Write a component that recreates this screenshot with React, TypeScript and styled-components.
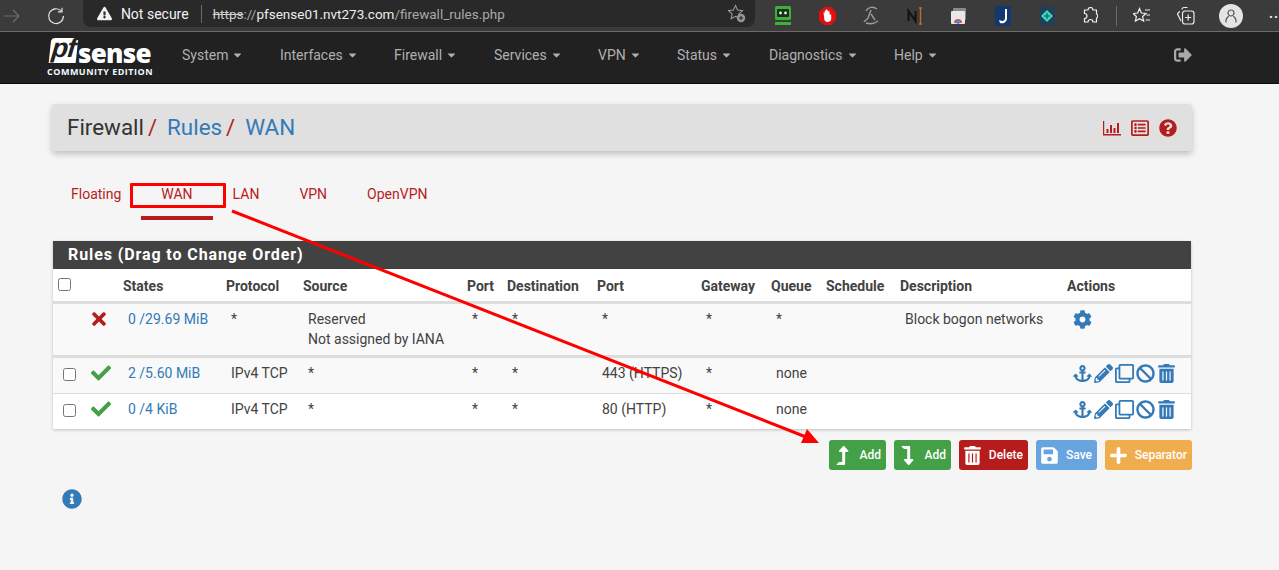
import React from "react";
import styled, { createGlobalStyle } from "styled-components";
import {
  FaAnchor,
  FaBan,
  FaCheck,
  FaCog,
  FaInfoCircle,
  FaLevelDownAlt,
  FaLevelUpAlt,
  FaPencilAlt,
  FaPlus,
  FaQuestionCircle,
  FaRegClone,
  FaRegListAlt,
  FaSave,
  FaSignOutAlt,
  FaTimes,
  FaTrashAlt,
  FaExclamationTriangle,
  FaCaretDown,
} from "react-icons/fa";

const GlobalStyle = createGlobalStyle`
  html, body {
    margin: 0;
    height: 570px;
    overflow: hidden;
    background: #f5f5f5;
    font-family: Roboto, "Liberation Sans", sans-serif;
    font-size: 14px;
    color: #424242;
  }
`;

const BrowserBar = styled.div`
  height: 31px;
  background: #3b3b3b;
  border-bottom: 1px solid #6a6a6a;
  display: flex;
  align-items: flex-start;
`;

const NavButtons = styled.div`
  width: 83px;
  height: 31px;
  display: flex;
  align-items: center;
  padding-left: 4px;
  box-sizing: border-box;
  gap: 27px;
`;

const AddressBar = styled.div`
  width: 673px;
  height: 27px;
  background: #292929;
  border-radius: 0 0 8px 8px;
  display: flex;
  align-items: center;
  padding-left: 14px;
  box-sizing: border-box;
  font-size: 14px;
  color: #f2f2f2;
`;

const NotSecure = styled.span`
  margin-left: 9px;
  padding-right: 12px;
  border-right: 1px solid #6b6b6b;
  line-height: 18px;
`;

const Url = styled.span`
  margin-left: 11px;
  color: #a8a8a8;
  font-size: 13.5px;
`;

const UrlHost = styled.span`
  color: #ededed;
`;

const UrlStrike = styled.span`
  color: #d0d0d0;
  text-decoration: line-through;
`;

const StarSlot = styled.div`
  margin-left: auto;
  margin-right: 9px;
  display: flex;
`;

const Extensions = styled.div`
  flex: 1;
  height: 31px;
  display: flex;
  align-items: center;
  padding-left: 20px;
`;

const ExtSlot = styled.div<{ $w?: number }>`
  width: ${(p) => p.$w ?? 44}px;
  height: 31px;
  flex: none;
  display: flex;
  align-items: center;
`;

const ExtDivider = styled.div`
  width: 1px;
  height: 20px;
  background: #6b6b6b;
  margin-right: 16px;
  flex: none;
`;

const Avatar = styled.div`
  width: 24px;
  height: 24px;
  border-radius: 50%;
  background: #e4e4e4;
  display: flex;
  align-items: center;
  justify-content: center;
`;

const Dots = styled.span`
  color: #eee;
  font-size: 14px;
  letter-spacing: 1px;
  font-weight: 700;
  margin-top: -6px;
`;

const NavBar = styled.nav`
  height: 52px;
  background: #212121;
  border-bottom: 1px solid #0c0c0c;
  box-sizing: border-box;
  display: flex;
  align-items: center;
  padding: 0 0 6px 47px;
`;

const Logo = styled.div`
  width: 116px;
  flex: none;
  display: flex;
  flex-direction: column;
  margin: 0 0 -6px;
`;

const LogoTop = styled.div`
  display: flex;
  align-items: flex-end;
  height: 25px;
  padding-left: 3px;
`;

const LogoPf = styled.span`
  background: #fff;
  color: #212121;
  width: 27px;
  height: 25px;
  border-radius: 4px 0 0 0;
  font: italic 900 27px/21px "Liberation Sans", sans-serif;
  letter-spacing: -1px;
  text-align: center;
  transform: skewX(-6deg);
`;

const LogoSense = styled.span`
  color: #fff;
  font: 800 26px/20px "Open Sans", "Liberation Sans", sans-serif;
  letter-spacing: -0.7px;
  margin-left: 1px;
`;

const LogoEdition = styled.span`
  color: #f2fbff;
  font: 700 9px/10px "Open Sans", "Liberation Sans", sans-serif;
  letter-spacing: 0.5px;
  white-space: nowrap;
  margin-top: 4px;
`;

const NavMenu = styled.div`
  display: flex;
  flex: 1;
`;

const NavItem = styled.a<{ $w: number }>`
  width: ${(p) => p.$w}px;
  flex: none;
  padding-left: 19px;
  box-sizing: border-box;
  color: #b0b0b0;
  font-size: 14px;
  display: flex;
  align-items: center;
  gap: 5px;
  svg {
    width: 9px;
    height: 12px;
  }
`;

const Logout = styled.div`
  color: #a9a9a9;
  font-size: 18px;
  display: flex;
  margin-right: 87px;
`;

const Page = styled.main`
  padding: 20px 87px 0 52px;
  position: relative;
`;

const TitleBar = styled.header`
  height: 47px;
  background: #e0e0e0;
  border-radius: 3px;
  box-shadow: 0 3px 6px rgba(0, 0, 0, 0.22);
  display: flex;
  align-items: center;
  padding: 0 15px;
`;

const Crumb = styled.h1<{ $link?: boolean }>`
  margin: 0 10px 0 0;
  font-size: 22.4px;
  font-weight: 400;
  line-height: 47px;
  color: ${(p) => (p.$link ? "#337ab7" : "#333")};
`;

const CrumbSlash = styled.span`
  color: #b71c1c;
  margin-left: 4px;
  font-size: 22px;
`;

const TitleIcons = styled.div`
  margin-left: auto;
  display: flex;
  align-items: center;
  gap: 10px;
  color: #b71c1c;
  font-size: 18px;
  svg {
    display: block;
  }
`;

const Tabs = styled.div`
  display: flex;
  margin: 27px 0 0 -1px;
  height: 42px;
`;

const Tab = styled.a<{ $active?: boolean }>`
  padding: 7px 20px 0;
  height: 42px;
  box-sizing: border-box;
  color: #b71c1c;
  font-size: 14px;
  line-height: 18px;
  border-bottom: 4px solid ${(p) => (p.$active ? "#b71c1c" : "transparent")};
`;

const RulesPanel = styled.section`
  margin: 21px 1px 0;
  background: #fff;
  box-shadow: 0 1px 3px rgba(0, 0, 0, 0.22);
`;

const RulesHeading = styled.h2`
  margin: 0;
  height: 28px;
  background: #424242;
  color: #fff;
  font-size: 16px;
  font-weight: 700;
  line-height: 28px;
  padding-left: 15px;
  letter-spacing: 0.9px;
`;

const RulesTable = styled.table`
  width: 100%;
  table-layout: fixed;
  border-collapse: separate;
  border-spacing: 0;
`;

const HeadCell = styled.th`
  height: 35px;
  padding: 2px 0 0 5px;
  box-sizing: border-box;
  text-align: left;
  font-size: 14px;
  font-weight: 700;
  color: #424242;
  border-bottom: 3px solid #ddd;
  white-space: nowrap;
`;

const Row = styled.tr<{ $h: number; $shade?: boolean; $thick?: boolean; $last?: boolean }>`
  background: ${(p) => (p.$shade ? "#f9f9f9" : "#fff")};
  td {
    height: ${(p) => p.$h}px;
    border-bottom: ${(p) => (p.$last ? "0" : p.$thick ? "3px" : "1px")} solid #ddd;
  }
`;

const Cell = styled.td<{ $blue?: boolean }>`
  padding: 5px 0 0 10px;
  box-sizing: border-box;
  vertical-align: top;
  line-height: 20px;
  color: ${(p) => (p.$blue ? "#337ab7" : "#424242")};
  white-space: nowrap;
`;

const CheckCell = styled.td`
  padding: 10px 0 0 10px;
  box-sizing: border-box;
  vertical-align: top;
`;

const HeadCheck = styled.input`
  margin: 0 0 4px 0;
  width: 13px;
  height: 13px;
  display: block;
`;

const RowCheck = styled.input`
  margin: 0;
  width: 13px;
  height: 13px;
  display: block;
`;

const StatusCell = styled.td<{ $ok?: boolean }>`
  padding: 4px 0 0 ${(p) => (p.$ok ? 3 : 1)}px;
  box-sizing: border-box;
  vertical-align: top;
  color: ${(p) => (p.$ok ? "#43a047" : "#b71c1c")};
  font-size: 20px;
  line-height: 20px;
  svg {
    display: block;
    margin-top: 1px;
  }
`;

const ActionIcons = styled.div`
  display: flex;
  align-items: center;
  gap: 2px;
  margin-left: 1px;
  color: #337ab7;
  font-size: 19px;
  height: 20px;
  svg {
    display: block;
    flex: none;
  }
`;

const ButtonRow = styled.div`
  display: flex;
  justify-content: flex-end;
  gap: 8px;
  margin-top: 11px;
`;

const ActionButton = styled.button<{ $bg: string; $w: number }>`
  width: ${(p) => p.$w}px;
  height: 30px;
  border: 0;
  border-radius: 3px;
  background: ${(p) => p.$bg};
  color: #fff;
  font-family: Roboto, sans-serif;
  font-size: 12px;
  font-weight: 500;
  padding: 0 5px 0 4px;
  display: flex;
  align-items: center;
  justify-content: space-between;
  svg {
    font-size: 19px;
    flex: none;
  }
`;

const InfoIcon = styled.div`
  margin: 19px 0 0 10px;
  color: #337ab7;
  font-size: 20px;
  display: flex;
`;

const RedBox = styled.div`
  position: absolute;
  left: 130px;
  top: 99px;
  width: 96px;
  height: 25px;
  border: 3px solid #f00;
  box-sizing: border-box;
  border-radius: 1px;
`;

const ArrowOverlay = styled.svg`
  position: absolute;
  left: 0;
  top: -84px;
  pointer-events: none;
`;

const cols = [35, 30, 103, 77, 164, 40, 90, 104, 70, 55, 74, 167, 129];
const heads = ["", "", "States", "Protocol", "Source", "Port", "Destination", "Port", "Gateway", "Queue", "Schedule", "Description", "Actions"];
const menu: [string, number][] = [
  ["System", 98],
  ["Interfaces", 114],
  ["Firewall", 100],
  ["Services", 104],
  ["VPN", 79],
  ["Status", 92],
  ["Diagnostics", 125],
  ["Help", 80],
];

const ChartIcon = () => (
  <svg width="18" height="16" viewBox="0 0 18 16" fill="currentColor">
    <path d="M0 1h1.2v13H18v1.4H0z" />
    <path d="M3.5 9h2v4h-2zM7 5h2v8H7zM10.5 8h2v5h-2zM14 3h2v10h-2z" />
  </svg>
);

const CollectionIcon = () => (
  <svg width="18" height="19" viewBox="0 0 18 19" fill="none" stroke="#eee" strokeWidth="1.2">
    <path d="M3 5.5 1.5 6.5a2 2 0 0 0-.5 2.6l3 6" />
    <path d="M5 3.5a2 2 0 0 1 2-2h3.5" />
    <rect x="5.5" y="5" width="11.5" height="13" rx="2.5" />
    <path d="M11.2 8.5v6M8.2 11.5h6" />
  </svg>
);

const RuleActions = () => (
  <ActionIcons>
    <FaAnchor />
    <FaPencilAlt />
    <FaRegClone />
    <FaBan />
    <FaTrashAlt />
  </ActionIcons>
);

const App = () => (
  <>
    <GlobalStyle />
    <BrowserBar>
      <NavButtons>
        <svg width="16" height="14" viewBox="0 0 16 14" fill="none" stroke="#6e6e6e" strokeWidth="1.2">
          <path d="M0 7h15M9 1l6 6-6 6" />
        </svg>
        <svg width="18" height="18" viewBox="0 0 18 18" fill="none" stroke="#e2e2e2" strokeWidth="1.2">
          <path d="M14.5 4.2A7.4 7.4 0 1 0 16.4 9" />
          <path d="M15 .8v4h-4" />
        </svg>
      </NavButtons>
      <AddressBar>
        <FaExclamationTriangle size={15} color="#f2f2f2" />
        <NotSecure>Not secure</NotSecure>
        <Url>
          <UrlStrike>https</UrlStrike>://<UrlHost>pfsense01.nvt273.com</UrlHost>/firewall_rules.php
        </Url>
        <StarSlot>
          <svg width="18" height="19" viewBox="0 0 18 19" fill="none">
            <path d="M7.5 1.5 9.6 6l4.9.6-3.6 3.3.9 4.8-4.3-2.4-4.3 2.4.9-4.8L.5 6.6 5.4 6z" stroke="#9a9a9a" strokeWidth="1.1" />
            <circle cx="13" cy="14" r="4.2" fill="#9a9a9a" />
            <path d="M13 11.8v4.4M10.8 14h4.4" stroke="#292929" strokeWidth="1.1" />
          </svg>
        </StarSlot>
      </AddressBar>
      <Extensions>
        <ExtSlot>
          <svg width="16" height="20" viewBox="0 0 16 20">
            <rect width="16" height="14" rx="1.5" fill="#3fae3a" />
            <rect x="2" y="3" width="12" height="8" rx="1" fill="#16331a" />
            <circle cx="5.5" cy="7" r="1.4" fill="#eee" />
            <circle cx="10.5" cy="7" r="1.4" fill="#eee" />
            <rect y="16" width="16" height="3" fill="#3fae3a" />
          </svg>
        </ExtSlot>
        <ExtSlot>
          <svg width="17" height="18" viewBox="0 0 17 18">
            <path d="M5 0h7l5 5v8l-5 5H5l-5-5V5z" fill="#e60f0f" />
            <path d="M4.5 5.5h1.3V3.6h1.2V2.6h1.2v1h1.2v1h1.2v3h1.6V11a3.6 3.6 0 0 1-6.8 2z" fill="#fff" />
          </svg>
        </ExtSlot>
        <ExtSlot>
          <svg width="16" height="19" viewBox="0 0 16 19" fill="none" stroke="#9c9c9c" strokeWidth="1.4">
            <path d="M3 5c2-4 7-5 11-2" />
            <path d="M8 4 5 12c-1 2-3 2-4 4M8 8l4 6" />
            <path d="M3 17c3 1 8 1 12-2" />
          </svg>
        </ExtSlot>
        <ExtSlot>
          <svg width="16" height="18" viewBox="0 0 16 18" fill="none">
            <path d="M1.5 14V4l7 10V4" stroke="#111" strokeWidth="2" />
            <path d="M12 1h3M13.5 1v16M12 17h3" stroke="#c8692c" strokeWidth="1.3" />
          </svg>
        </ExtSlot>
        <ExtSlot>
          <svg width="15" height="16" viewBox="0 0 15 16">
            <rect x="2" y="0" width="13" height="12" rx="1" fill="#8a8a8a" />
            <rect y="3" width="14" height="13" rx="1" fill="#e8e8e8" />
            <path d="M3 15a4 4 0 0 1 8 0z" fill="#e64a3a" />
            <circle cx="7" cy="14" r="2" fill="#4a8ae6" />
          </svg>
        </ExtSlot>
        <ExtSlot>
          <svg width="16" height="20" viewBox="0 0 16 20">
            <rect width="16" height="20" fill="#12386e" />
            <path d="M10 3h2v9c0 4-3 6-7 5l-1-3 3 1c2 0 3-1 3-3z" fill="#fff" />
          </svg>
        </ExtSlot>
        <ExtSlot>
          <svg width="16" height="20" viewBox="0 0 16 20">
            <rect width="16" height="20" rx="2" fill="#243f53" />
            <path d="M8 4l6 6-6 6-6-6z" fill="#2fe0c6" />
            <path d="M8 7v6M5 10h6" stroke="#243f53" strokeWidth="1" />
          </svg>
        </ExtSlot>
        <ExtSlot $w={33}>
          <svg width="15" height="17" viewBox="0 0 15 17" fill="none" stroke="#eee" strokeWidth="1.2">
            <path d="M5 3a2.5 2.5 0 0 1 5 0h3.5v4a2.2 2.2 0 0 1 0 4v4H10a2.5 2.5 0 0 0-5 0H1.5v-3.5a2.5 2.5 0 0 0 0-5V3z" />
          </svg>
        </ExtSlot>
        <ExtDivider />
        <ExtSlot $w={44}>
          <svg width="18" height="18" viewBox="0 0 18 18" fill="none" stroke="#eee" strokeWidth="1.2">
            <path d="M6.5 1.5 8.4 6l4.6.5-3.4 3 1 4.6-4.1-2.4-4.1 2.4 1-4.6L.1 6.5 4.7 6z" />
            <path d="M12 3h5M13.5 8H17M12.5 13H17" />
          </svg>
        </ExtSlot>
        <ExtSlot $w={42}>
          <CollectionIcon />
        </ExtSlot>
        <ExtSlot $w={50}>
          <Avatar>
            <svg width="12" height="14" viewBox="0 0 12 14" fill="none" stroke="#555" strokeWidth="1.2">
              <circle cx="6" cy="4" r="3" />
              <path d="M1 13.5v-2c0-2 2-4 3-4M11 13.5v-2c0-2-2-4-3-4" />
            </svg>
          </Avatar>
        </ExtSlot>
        <Dots>..</Dots>
      </Extensions>
    </BrowserBar>
    <NavBar>
      <Logo>
        <LogoTop>
          <LogoPf>pf</LogoPf>
          <LogoSense>sense</LogoSense>
        </LogoTop>
        <LogoEdition>COMMUNITY EDITION</LogoEdition>
      </Logo>
      <NavMenu>
        {menu.map(([label, w]) => (
          <NavItem key={label} $w={w}>
            {label}
            <FaCaretDown />
          </NavItem>
        ))}
      </NavMenu>
      <Logout>
        <FaSignOutAlt />
      </Logout>
    </NavBar>
    <Page>
      <TitleBar>
        <Crumb>
          Firewall<CrumbSlash>/</CrumbSlash>
        </Crumb>
        <Crumb $link>
          Rules<CrumbSlash>/</CrumbSlash>
        </Crumb>
        <Crumb $link>WAN</Crumb>
        <TitleIcons>
          <ChartIcon />
          <FaRegListAlt />
          <FaQuestionCircle />
        </TitleIcons>
      </TitleBar>
      <Tabs>
        <Tab>Floating</Tab>
        <Tab $active>WAN</Tab>
        <Tab>LAN</Tab>
        <Tab>VPN</Tab>
        <Tab>OpenVPN</Tab>
      </Tabs>
      <RulesPanel>
        <RulesHeading>Rules (Drag to Change Order)</RulesHeading>
        <RulesTable>
          <colgroup>
            {cols.map((w, i) => (
              <col key={i} width={w} />
            ))}
          </colgroup>
          <thead>
            <tr>
              {heads.map((h, i) => (
                <HeadCell key={i}>{i === 0 ? <HeadCheck type="checkbox" /> : h}</HeadCell>
              ))}
            </tr>
          </thead>
          <tbody>
            <Row $h={54} $shade $thick>
              <CheckCell />
              <StatusCell>
                <FaTimes />
              </StatusCell>
              <Cell $blue>0 /29.69 MiB</Cell>
              <Cell>*</Cell>
              <Cell>
                Reserved
                <br />
                Not assigned by IANA
              </Cell>
              <Cell>*</Cell>
              <Cell>*</Cell>
              <Cell>*</Cell>
              <Cell>*</Cell>
              <Cell>*</Cell>
              <Cell />
              <Cell>Block bogon networks</Cell>
              <Cell>
                <ActionIcons>
                  <FaCog />
                </ActionIcons>
              </Cell>
            </Row>
            <Row $h={36} $shade>
              <CheckCell>
                <RowCheck type="checkbox" />
              </CheckCell>
              <StatusCell $ok>
                <FaCheck />
              </StatusCell>
              <Cell $blue>2 /5.60 MiB</Cell>
              <Cell>IPv4 TCP</Cell>
              <Cell>*</Cell>
              <Cell>*</Cell>
              <Cell>*</Cell>
              <Cell>443 (HTTPS)</Cell>
              <Cell>*</Cell>
              <Cell>none</Cell>
              <Cell />
              <Cell />
              <Cell>
                <RuleActions />
              </Cell>
            </Row>
            <Row $h={35} $last>
              <CheckCell>
                <RowCheck type="checkbox" />
              </CheckCell>
              <StatusCell $ok>
                <FaCheck />
              </StatusCell>
              <Cell $blue>0 /4 KiB</Cell>
              <Cell>IPv4 TCP</Cell>
              <Cell>*</Cell>
              <Cell>*</Cell>
              <Cell>*</Cell>
              <Cell>80 (HTTP)</Cell>
              <Cell>*</Cell>
              <Cell>none</Cell>
              <Cell />
              <Cell />
              <Cell>
                <RuleActions />
              </Cell>
            </Row>
          </tbody>
        </RulesTable>
      </RulesPanel>
      <ButtonRow>
        <ActionButton $bg="#43a047" $w={57}>
          <FaLevelUpAlt />
          Add
        </ActionButton>
        <ActionButton $bg="#43a047" $w={57}>
          <FaLevelDownAlt />
          Add
        </ActionButton>
        <ActionButton $bg="#b71c1c" $w={69}>
          <FaTrashAlt />
          Delete
        </ActionButton>
        <ActionButton $bg="#68a4e0" $w={61}>
          <FaSave />
          Save
        </ActionButton>
        <ActionButton $bg="#f0ad4e" $w={87}>
          <FaPlus />
          Separator
        </ActionButton>
      </ButtonRow>
      <InfoIcon>
        <FaInfoCircle />
      </InfoIcon>
      <RedBox />
      <ArrowOverlay width="1279" height="570" viewBox="0 0 1279 570">
        <line x1="232" y1="211" x2="806" y2="437" stroke="#f00" strokeWidth="3" />
        <path d="M819 443 L801 443 L807 429 Z" fill="#f00" />
      </ArrowOverlay>
    </Page>
  </>
);

export default App;
